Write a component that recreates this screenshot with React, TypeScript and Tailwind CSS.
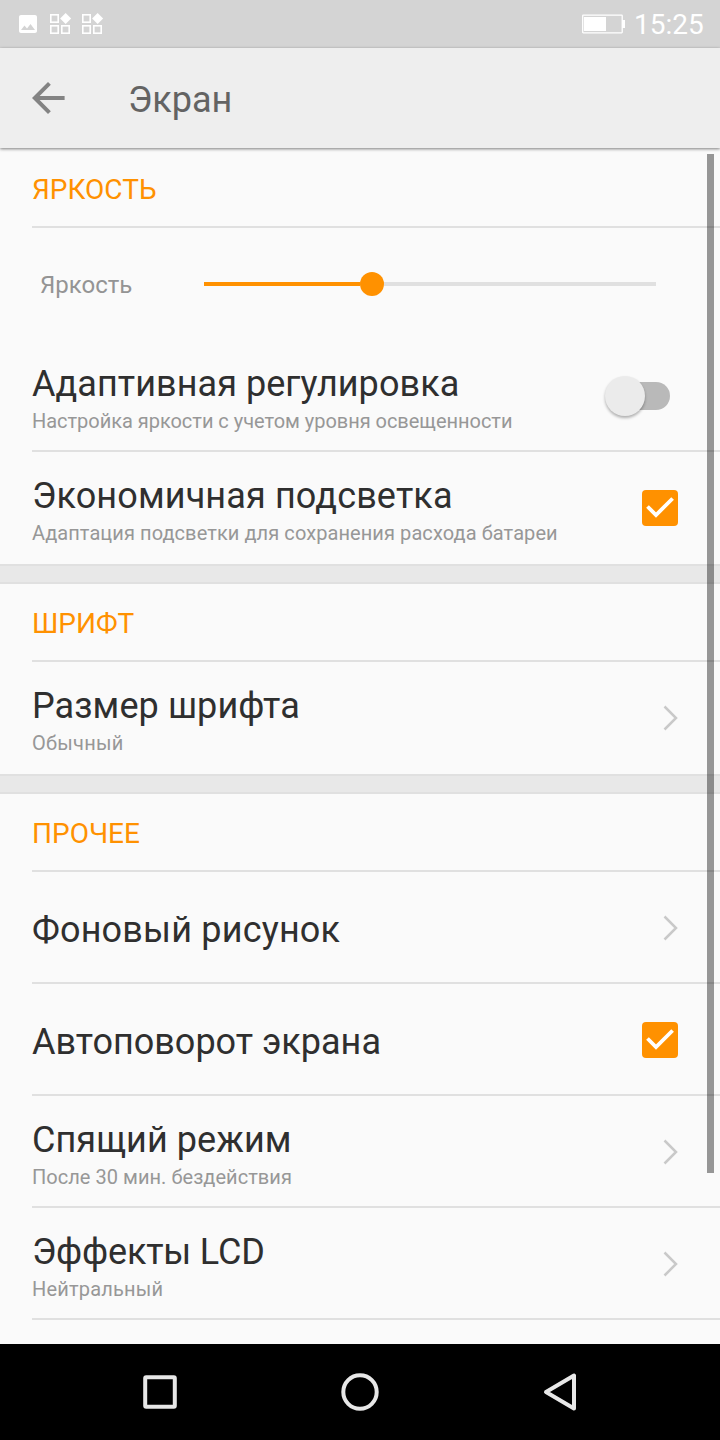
import { useState } from 'react'
import type { ReactNode } from 'react'

function ImageIcon() {
  return (
    <svg width="24" height="24" viewBox="0 0 24 24" fill="white">
      <path d="M21 19V5c0-1.1-.9-2-2-2H5c-1.1 0-2 .9-2 2v14c0 1.1.9 2 2 2h14c1.1 0 2-.9 2-2zM8.5 13.5l2.5 3.01L14.5 12l4.5 6H5l3.5-4.5z" />
    </svg>
  )
}

function WidgetsIcon() {
  return (
    <svg width="24" height="24" viewBox="0 0 24 24" fill="none" stroke="white" strokeWidth="1.6">
      <rect x="2.8" y="2.8" width="7.4" height="7.4" />
      <rect x="2.8" y="13.8" width="7.4" height="7.4" />
      <rect x="13.8" y="13.8" width="7.4" height="7.4" />
      <path d="M17.6 0.9L23.1 6.4L17.6 11.9L12.1 6.4z" fill="white" stroke="none" />
    </svg>
  )
}

function BatteryIcon() {
  return (
    <svg width="44" height="20" viewBox="0 0 44 20" fill="white">
      <rect x="0.7" y="1.2" width="39.5" height="17.6" rx="0.5" fill="none" stroke="white" strokeWidth="1.3" />
      <rect x="2" y="3" width="22" height="14" />
      <rect x="40" y="6" width="3" height="8" />
    </svg>
  )
}

function StatusBar() {
  return (
    <div className="flex h-12 items-center justify-between bg-[#d4d4d4] px-4">
      <div className="flex items-center gap-2">
        <ImageIcon />
        <WidgetsIcon />
        <WidgetsIcon />
      </div>
      <div className="flex items-center gap-2">
        <BatteryIcon />
        <span className="w-[70px] pt-0.5 text-[28px] leading-[46px] whitespace-nowrap text-white">15:25</span>
      </div>
    </div>
  )
}

function Header() {
  return (
    <header className="relative z-10 flex h-[100px] items-center bg-[#eeeeee] pl-6 shadow-[0_1px_3px_rgba(0,0,0,0.5)]">
      <button type="button" aria-label="Назад">
        <svg width="48" height="48" viewBox="0 0 24 24" fill="#838383">
          <path d="M20.3 11H7.83l5.59-5.59L12 4l-8 8 8 8 1.41-1.41L7.83 13H20.3v-2z" />
        </svg>
      </button>
      <h1 className="ml-14 pt-[3px] text-[36px] leading-[42px] text-[#636363]">Экран</h1>
    </header>
  )
}

function SectionTitle({ children }: { children: ReactNode }) {
  return (
    <h2 className="ml-8 h-[78px] border-b-2 border-[#e0e0e0] text-[28px] leading-[79px] text-[#ff9100]">
      {children}
    </h2>
  )
}

function Gap() {
  return <div className="h-5 border-y-2 border-[#e0e0e0] bg-[#e8e8e8]" />
}

function Chevron() {
  return (
    <svg width="16" height="28" viewBox="0 0 16 28" fill="none" stroke="#c9c9c9" strokeWidth="2.5">
      <path d="M2.5 2.5L14 14L2.5 25.5" />
    </svg>
  )
}

function Checkbox() {
  const [checked, setChecked] = useState(true)
  return (
    <button type="button" role="checkbox" aria-checked={checked} onClick={() => setChecked(!checked)}
      className="size-9 rounded-[4px] bg-[#ff9100]">
      {checked && (
        <svg width="36" height="36" viewBox="0 0 36 36" fill="none" stroke="white" strokeWidth="3.8">
          <path d="M5.5 16.5L14 25L30.6 8.5" />
        </svg>
      )}
    </button>
  )
}

function Toggle() {
  return (
    <div role="switch" aria-checked="false" className="mr-2 flex h-7 w-[60px] items-center rounded-full bg-[#b9b9b9]">
      <div className="-ml-[5px] size-10 rounded-full bg-[#ebebeb] shadow-[0_2px_3px_rgba(0,0,0,0.3)]" />
    </div>
  )
}

type RowProps = {
  title: string
  titleClass?: string
  subtitle?: string
  subtitleClass?: string
  last?: boolean
  children: ReactNode
}

function Row({ title, titleClass = '', subtitle, subtitleClass = '', last, children }: RowProps) {
  return (
    <div className={`ml-8 flex h-28 items-center justify-between pr-[42px] ${last ? '' : 'border-b-2 border-[#e0e0e0] pt-0.5'}`}>
      <div className="pt-1">
        <div className={`text-[36px] leading-[42px] text-[#2f2f2f] ${titleClass}`}>{title}</div>
        {subtitle && <div className={`mt-1 text-[20px] leading-6 text-[#979797] ${subtitleClass}`}>{subtitle}</div>}
      </div>
      {children}
    </div>
  )
}

function BrightnessSlider() {
  return (
    <div className="flex h-28 items-center pr-16 pl-10">
      <span className="w-[164px] pt-0.5 text-[24px] leading-7 text-[#949494]">Яркость</span>
      <div className="flex flex-1 items-center">
        <div className="h-1 w-[156px] bg-[#ff9100]" />
        <div className="size-6 rounded-full bg-[#ff9100]" />
        <div className="h-1 flex-1 bg-[#e0e0e0]" />
      </div>
    </div>
  )
}

function NavBar() {
  return (
    <nav className="flex h-24 items-center justify-between bg-black px-[140px]">
      <svg width="40" height="40" viewBox="0 0 40 40" fill="none" stroke="#e8e8e8" strokeWidth="4">
        <rect x="5.2" y="5.2" width="29.6" height="29.6" rx="1" />
      </svg>
      <svg width="40" height="40" viewBox="0 0 40 40" fill="none" stroke="#e8e8e8" strokeWidth="4">
        <circle cx="20" cy="20" r="16.7" />
      </svg>
      <svg width="40" height="40" viewBox="0 0 40 40" fill="none" stroke="#e8e8e8" strokeWidth="4" strokeLinejoin="round">
        <path d="M34 3.6V36.4L6 20z" />
      </svg>
    </nav>
  )
}

export default function App() {
  return (
    <div className="flex h-[1440px] w-[720px] flex-col overflow-hidden bg-[#fafafa] font-[Roboto,sans-serif]">
      <StatusBar />
      <Header />
      <main className="relative flex-1 overflow-hidden pt-0.5">
        <SectionTitle>ЯРКОСТЬ</SectionTitle>
        <BrightnessSlider />
        <Row
          title="Адаптивная регулировка"
          titleClass="tracking-[0.06px]"
          subtitle="Настройка яркости с учетом уровня освещенности"
          subtitleClass="tracking-[-0.03px]"
        >
          <Toggle />
        </Row>
        <Row
          title="Экономичная подсветка"
          titleClass="tracking-[0.14px]"
          subtitle="Адаптация подсветки для сохранения расхода батареи"
          subtitleClass="tracking-[0.08px]"
          last
        >
          <Checkbox />
        </Row>
        <Gap />

        <SectionTitle>ШРИФТ</SectionTitle>
        <Row title="Размер шрифта" titleClass="tracking-[0.08px]" subtitle="Обычный" subtitleClass="tracking-[0.25px]" last>
          <Chevron />
        </Row>
        <Gap />

        <SectionTitle>ПРОЧЕЕ</SectionTitle>
        <Row title="Фоновый рисунок" titleClass="tracking-[0.18px]">
          <Chevron />
        </Row>
        <Row title="Автоповорот экрана">
          <Checkbox />
        </Row>
        <Row title="Спящий режим" titleClass="tracking-[0.08px]" subtitle="После 30 мин. бездействия" subtitleClass="tracking-[0.04px]">
          <Chevron />
        </Row>
        <Row title="Эффекты LCD" titleClass="tracking-[-0.18px]" subtitle="Нейтральный" subtitleClass="tracking-[0.18px]">
          <Chevron />
        </Row>

        {/* scroll indicator */}
        <div className="absolute top-1.5 right-[6.5px] h-[1019px] w-[7px] bg-black/40" />
      </main>
      <NavBar />
    </div>
  )
}
